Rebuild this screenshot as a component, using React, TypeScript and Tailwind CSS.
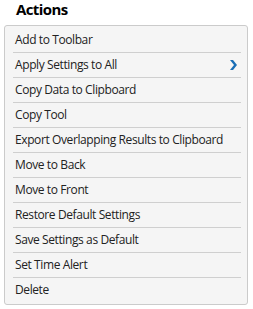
import React from "react";

const items = [
  "Add to Toolbar",
  "Apply Settings to All",
  "Copy Data to Clipboard",
  "Copy Tool",
  "Export Overlapping Results to Clipboard",
  "Move to Back",
  "Move to Front",
  "Restore Default Settings",
  "Save Settings as Default",
  "Set Time Alert",
  "Delete",
];

export default function App() {
  return (
    <div
      className="w-[253px] h-[309px] bg-white"
      style={{ fontFamily: '"Open Sans", "Noto Sans", sans-serif' }}
    >
      <div className="pl-[16px] pt-[1px] h-[25px] leading-[17px] text-[15px] font-bold tracking-[-0.6px] text-black">
        Actions
      </div>
      <div className="ml-[4px] w-[244px] border border-[#cbcbcb] rounded-[3px] bg-[#f5f5f5] py-[2px]">
        {items.map((label, i) => (
          <div key={label}>
            {i > 0 && <div className="ml-[8px] mr-[6px] h-px bg-[#cfcfcf]" />}
            <div className="h-[24px] flex items-center justify-between pl-[10px] pr-[10px] text-[12px] tracking-[-0.4px] text-[#222222] whitespace-nowrap">
              <span>{label}</span>
              {label === "Apply Settings to All" && (
                <svg width="7" height="10" viewBox="0 0 7 10">
                  <path d="M0 0 L3 0 L7 5 L3 10 L0 10 L4 5 Z" fill="#1a6eb6" />
                </svg>
              )}
            </div>
          </div>
        ))}
      </div>
    </div>
  );
}
